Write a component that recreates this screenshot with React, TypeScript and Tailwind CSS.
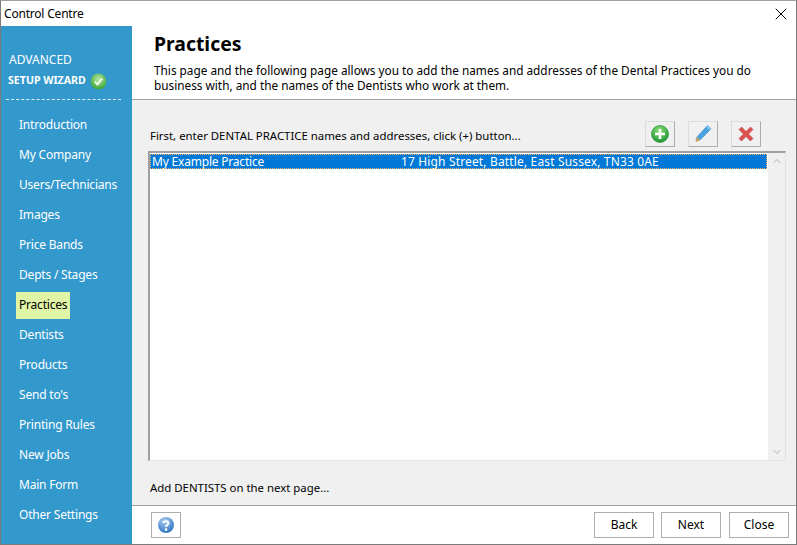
import { X, ChevronUp, ChevronDown } from 'lucide-react';

const navItems = [
  'Introduction',
  'My Company',
  'Users/Technicians',
  'Images',
  'Price Bands',
  'Depts / Stages',
  'Practices',
  'Dentists',
  'Products',
  "Send to's",
  'Printing Rules',
  'New Jobs',
  'Main Form',
  'Other Settings',
];

function ToolButton({ children, className = '' }: { children: React.ReactNode; className?: string }) {
  return (
    <button className={`w-[30px] h-[26px] bg-[#f0f0f0] border border-[#adadad] border-t-[#dcdcdc] border-l-[#dcdcdc] flex items-center justify-center ${className}`}>
      {children}
    </button>
  );
}

function FooterButton({ label }: { label: string }) {
  return (
    <button className="w-[60px] h-[26px] bg-white border border-[#adadad] text-[12px] text-black">
      {label}
    </button>
  );
}

export default function App() {
  return (
    <div className="w-[797px] h-[545px] bg-white flex flex-col border-l border-r border-b border-t border-[#7a7a7a] border-t-[#a0a0a0] overflow-hidden text-[12px] text-black font-['Noto_Sans','Open_Sans',sans-serif]">
      {/* Title bar */}
      <div className="h-[25px] shrink-0 flex items-center justify-between pl-[3px] pr-[5px]">
        <span className="text-[12px] tracking-[-0.2px]">Control Centre</span>
        <X size={20} strokeWidth={1.2} />
      </div>

      <div className="flex flex-1 min-h-0">
        {/* Sidebar */}
        <div className="w-[131px] shrink-0 bg-[#3398cc] text-white flex flex-col">
          <div className="pl-[8px] pt-[25px] text-[12px] leading-[18px]">ADVANCED</div>
          <div className="pl-[7px] pt-[3px] flex items-center h-[21px] gap-[4px]">
            <span className="text-[10.6px] font-bold">SETUP WIZARD</span>
            <svg width="17" height="17" viewBox="0 0 16 16">
              <defs>
                <radialGradient id="gg" cx="50%" cy="35%" r="70%">
                  <stop offset="0%" stopColor="#b5e8a0" />
                  <stop offset="100%" stopColor="#2f9e2f" />
                </radialGradient>
              </defs>
              <circle cx="8" cy="8" r="7.5" fill="url(#gg)" />
              <path d="M4.5 8 L7 10.8 L11.5 5.2" fill="none" stroke="#eef8e6" strokeWidth="2" />
            </svg>
          </div>
          <div className="mx-[5px] mt-[9px] h-0 border-t border-dashed border-[#e4f1f8] w-[115px]" />
          <div className="mt-[10px] flex flex-col items-start pl-[15px] text-[12px] tracking-[-0.2px]">
            {navItems.map((item) => (
              <div
                key={item}
                className={`h-[30px] flex items-center px-[3px] ${item === 'Practices' ? 'text-black' : ''}`}
              >
                <span className={item === 'Practices' ? 'bg-[#e0f4a6] -mx-[3px] px-[3px] h-[27px] flex items-center' : ''}>
                  {item}
                </span>
              </div>
            ))}
          </div>
        </div>

        {/* Main */}
        <div className="flex-1 min-w-0 flex flex-col">
          {/* Header */}
          <div className="h-[74px] shrink-0 pl-[22px] pr-[30px] border-b border-[#a0a0a0]">
            <h1 className="text-[19.4px] font-bold leading-[26px] pt-[5px] h-[32px]">Practices</h1>
            <p className="text-[11.8px] leading-[15px] pt-[5px]">
              This page and the following page allows you to add the names and addresses of the Dental Practices you do business with, and the names of the Dentists who work at them.
            </p>
          </div>

          {/* Content */}
          <div className="flex-1 min-h-0 bg-[#f0f0f0] flex flex-col pl-[16px] pr-[10px]">
            <div className="h-[51px] shrink-0 flex items-start pt-[21px]">
              <span className="pl-[2px] pt-[6px] text-[11.4px]">First, enter DENTAL PRACTICE names and addresses, click (+) button...</span>
              <div className="ml-auto flex gap-[13px] pr-[25px]">
                <ToolButton>
                  <svg width="20" height="20" viewBox="0 0 20 20">
                    <defs>
                      <radialGradient id="ga" cx="45%" cy="30%" r="75%">
                        <stop offset="0%" stopColor="#8fe07a" />
                        <stop offset="100%" stopColor="#12912a" />
                      </radialGradient>
                    </defs>
                    <circle cx="10" cy="10" r="8.5" fill="url(#ga)" stroke="#1c8a2c" strokeWidth="0.6" />
                    <path d="M10 5 V15 M5 10 H15" stroke="#fff" strokeWidth="2.6" />
                  </svg>
                </ToolButton>
                <ToolButton>
                  <svg width="20" height="20" viewBox="0 0 20 20">
                    <path d="M14.5 1.5 L18 5 L7 16 L3 17 L4 13 Z" fill="#4aa3e0" stroke="#2f82c4" strokeWidth="0.6" />
                    <path d="M14.5 1.5 L18 5 L16.5 6.5 L13 3 Z" fill="#7cc3ee" />
                    <path d="M4 13 L7 16 L3 18 Z" fill="#e0a050" />
                  </svg>
                </ToolButton>
                <ToolButton>
                  <svg width="20" height="20" viewBox="0 0 20 20">
                    <path d="M3 5.5 L5.5 3 L10 7.5 L14.5 3 L17 5.5 L12.5 10 L17 14.5 L14.5 17 L10 12.5 L5.5 17 L3 14.5 L7.5 10 Z" fill="#dc5050" stroke="#b84040" strokeWidth="0.6" />
                  </svg>
                </ToolButton>
              </div>
            </div>

            {/* List */}
            <div className="h-[310px] shrink-0 bg-white border-t-2 border-l-2 border-[#a0a0a0] border-r border-b border-r-[#e3e3e3] border-b-[#e3e3e3] flex">
              <div className="flex-1 min-w-0 pt-[1px] pr-[1px]">
                <div className="h-[15px] leading-[15px] flex items-baseline bg-[#0078d7] text-white text-[12px] outline-1 -outline-offset-1 outline-dotted outline-[#f5b060] pl-[2px]">
                  <span className="w-[249px] shrink-0 tracking-[-0.2px]">My Example Practice</span>
                  <span className="tracking-[0.15px]">17 High Street, Battle, East Sussex, TN33 0AE</span>
                </div>
              </div>
              <div className="w-[17px] shrink-0 bg-[#f0f0f0] flex flex-col items-center justify-between py-[2px] text-[#b0b0b0]">
                <ChevronUp size={12} strokeWidth={2} />
                <ChevronDown size={12} strokeWidth={2} />
              </div>
            </div>

            <div className="pt-[18px] pl-[2px] text-[11.4px]">Add DENTISTS on the next page...</div>
          </div>

          {/* Footer */}
          <div className="h-[39px] shrink-0 border-t border-[#a0a0a0] flex items-center pl-[19px] pr-[7px]">
            <button className="w-[30px] h-[26px] bg-white border border-[#adadad] flex items-center justify-center">
              <svg width="18" height="18" viewBox="0 0 18 18">
                <defs>
                  <radialGradient id="gh" cx="40%" cy="25%" r="80%">
                    <stop offset="0%" stopColor="#a9cdf0" />
                    <stop offset="100%" stopColor="#2a6fc0" />
                  </radialGradient>
                </defs>
                <circle cx="9" cy="9" r="8" fill="url(#gh)" />
                <path d="M6.5 7 C6.5 4.5 11.5 4.5 11.5 7 C11.5 9 9 8.8 9 11" fill="none" stroke="#fff" strokeWidth="2" />
                <circle cx="9" cy="13.6" r="1.3" fill="#fff" />
              </svg>
            </button>
            <div className="ml-auto flex gap-[7px]">
              <FooterButton label="Back" />
              <FooterButton label="Next" />
              <div className="ml-[1px]">
                <FooterButton label="Close" />
              </div>
            </div>
          </div>
        </div>
      </div>
    </div>
  );
}
